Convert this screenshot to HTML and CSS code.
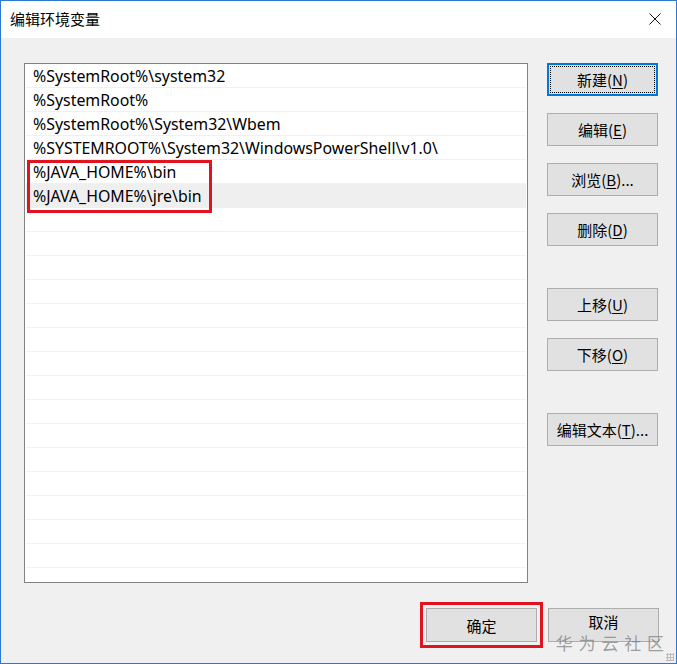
FILE: index.html
```html
<!DOCTYPE html>
<html lang="zh-CN">
<head>
<meta charset="utf-8">
<title>编辑环境变量</title>
<link rel="stylesheet" href="styles.css">
</head>
<body>
<div class="window">
  <div class="titlebar">
    <span class="title">编辑环境变量</span>
    <svg class="close" width="12" height="12" viewBox="0 0 12 12"><path d="M0.5 0.5 L11.5 11.5 M11.5 0.5 L0.5 11.5" stroke="#111" stroke-width="1" fill="none"/></svg>
  </div>
  <div class="body">
    <div class="main">
      <div class="list">
        <div class="row">%SystemRoot%\system32</div>
        <div class="row">%SystemRoot%</div>
        <div class="row">%SystemRoot%\System32\Wbem</div>
        <div class="row">%SYSTEMROOT%\System32\WindowsPowerShell\v1.0\</div>
        <div class="row">%JAVA_HOME%\bin</div>
        <div class="row selected">%JAVA_HOME%\jre\bin</div>
        <div class="row"></div><div class="row"></div><div class="row"></div><div class="row"></div>
        <div class="row"></div><div class="row"></div><div class="row"></div><div class="row"></div>
        <div class="row"></div><div class="row"></div><div class="row"></div><div class="row"></div>
        <div class="row"></div><div class="row"></div><div class="row"></div><div class="row"></div>
        <div class="mark"></div>
      </div>
      <div class="side">
        <button class="btn default">新建(<u>N</u>)</button>
        <button class="btn">编辑(<u>E</u>)</button>
        <button class="btn">浏览(<u>B</u>)...</button>
        <button class="btn">删除(<u>D</u>)</button>
        <button class="btn group">上移(<u>U</u>)</button>
        <button class="btn">下移(<u>O</u>)</button>
        <button class="btn group">编辑文本(<u>T</u>)...</button>
      </div>
    </div>
    <div class="footer">
      <button class="btn ok">确定</button>
      <button class="btn cancel">取消</button>
    </div>
    <div class="watermark">华 为 云 社 区</div>
    <div class="grip"></div>
  </div>
</div>
</body>
</html>
```
FILE: styles.css
```css
* { box-sizing: border-box; }
html, body { margin: 0; padding: 0; }
body {
  font-family: "Noto Sans", "Noto Sans CJK SC", sans-serif;
  font-size: 15px;
  color: #000;
}
.window {
  width: 677px;
  height: 664px;
  border: 1px solid #2b79d0;
  background: #f0f0f0;
  display: flex;
  flex-direction: column;
  overflow: hidden;
}
.titlebar {
  height: 37px;
  background: #fff;
  display: flex;
  align-items: center;
  justify-content: space-between;
  padding: 0 15px 0 9px;
  flex: none;
}
.title {
  font-family: "Noto Sans CJK SC", sans-serif;
  font-size: 15px;
  margin-top: -2px;
}
.close { display: block; margin-top: -1px; }
.body {
  position: relative;
  flex: 1;
}
.main {
  display: flex;
  align-items: flex-start;
  padding: 25px 0 0 23px;
  gap: 19px;
}
.list {
  position: relative;
  width: 504px;
  height: 520px;
  background: #fff;
  border: 1px solid #828282;
  padding: 0 1px;
  overflow: hidden;
}
.row {
  height: 24px;
  border-bottom: 1px solid #f0f0f0;
  padding-left: 7px;
  padding-top: 1px;
  font-size: 15.9px;
  line-height: 23px;
  white-space: nowrap;
}
.row.selected { background: #efefef; }
.mark {
  position: absolute;
  left: 2px;
  top: 96px;
  width: 185px;
  height: 53px;
  border: 3px solid #e0141e;
}
.side {
  display: flex;
  flex-direction: column;
  gap: 17px;
  padding-top: 0;
}
.btn {
  width: 111px;
  height: 33px;
  background: #e1e1e1;
  border: 1px solid #adadad;
  font-family: "Noto Sans CJK SC", sans-serif;
  font-size: 15px;
  color: #000;
  padding: 0;
  margin: 0;
  position: relative;
}
.btn u { text-underline-offset: 2px; }
.btn.default {
  border: 2px solid #0078d7;
}
.btn.default::after {
  content: "";
  position: absolute;
  inset: 1px;
  border: 1px dotted #000;
}
.btn.group { margin-top: 25px; }
.footer {
  display: flex;
  justify-content: flex-end;
  gap: 11px;
  padding: 25px 17px 0 0;
}
.footer .btn { height: 34px; }
.cancel { padding-bottom: 7px; }
.ok {
  outline: 3px solid #e0141e;
  outline-offset: 3px;
}
.watermark {
  position: absolute;
  right: 11px;
  bottom: 11px;
  font-family: "Noto Sans CJK SC", sans-serif;
  font-size: 17px;
  line-height: 19px;
  color: rgba(120, 120, 120, 0.7);
  letter-spacing: 1px;
}
.grip {
  position: absolute;
  right: 2px;
  bottom: 2px;
  width: 8px;
  height: 8px;
  background-image: radial-gradient(circle, #bbb 1px, transparent 1.2px);
  background-size: 3px 3px;
}
```
